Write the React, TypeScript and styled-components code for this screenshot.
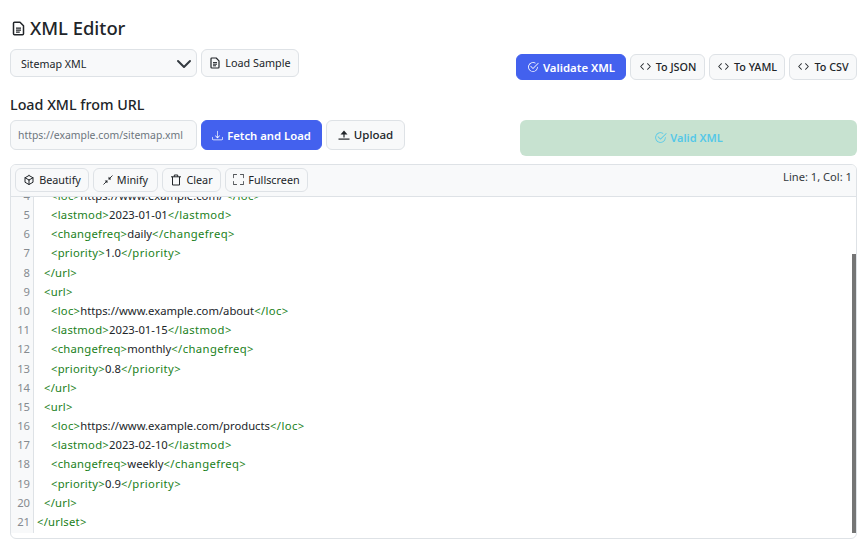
import React from 'react';
import styled, { createGlobalStyle } from 'styled-components';
import { BsDownload, BsCheck2Circle, BsCode, BsFullscreen } from 'react-icons/bs';
import { TbBox } from 'react-icons/tb';

const Global = createGlobalStyle`
  html, body { margin: 0; padding: 0; background: #fff; }
  body { font-family: "Noto Sans", "Open Sans", sans-serif; color: #212529; }
  * { box-sizing: border-box; }
`;

const Page = styled.div`
  width: 866px; height: 548px; padding: 16px 9px 0 10px; overflow: hidden;
`;
const Title = styled.h1`
  display: flex; align-items: center; gap: 4px; margin: 0; height: 24px;
  font-size: 18.4px; font-weight: 500; color: #212529; line-height: 24px; padding-left: 1px;
`;
const TopRow = styled.div`
  display: flex; justify-content: space-between; margin-top: 9px; height: 31px;
`;
const Group = styled.div<{ $end?: boolean }>`
  display: flex; align-items: flex-start; align-self: ${p => (p.$end ? 'flex-end' : 'flex-start')}; gap: 4px;
`;
const Select = styled.div`
  width: 187px; height: 28px; display: flex; align-items: center; justify-content: space-between;
  padding: 1px 4px 0 10px; border: 1px solid #dee2e6; border-radius: 6px; background: #f8f9fa;
  font-size: 10.7px; color: #212529;
`;
const Button = styled.div<{ $primary?: boolean; $strong?: boolean; $w: number; $h: number; $fs?: number }>`
  display: flex; align-items: center; justify-content: center; gap: 4px;
  width: ${p => p.$w}px; height: ${p => p.$h}px; border-radius: 6px;
  padding-bottom: ${p => (p.$primary ? 0 : 1)}px;
  font-size: ${p => p.$fs ?? 10.8}px;
  font-weight: ${p => (p.$primary ? 600 : p.$strong ? 500 : 400)};
  background: ${p => (p.$primary ? '#4361ee' : '#f8f9fa')};
  color: ${p => (p.$primary ? '#fff' : '#212529')};
  border: 1px solid ${p => (p.$primary ? '#4361ee' : '#dee2e6')};
`;
const Label = styled.div`
  margin-top: 15px; height: 20px; font-size: 14.3px; font-weight: 500; line-height: 20px; color: #212529;
`;
const LoadRow = styled.div`
  display: flex; justify-content: space-between; align-items: flex-start; margin-top: 5px; height: 36px;
`;
const UrlInput = styled.div`
  width: 187px; height: 30px; display: flex; align-items: center; padding: 0 7px;
  border: 1px solid #dee2e6; border-radius: 6px; background: #f8f9fa; font-size: 10.4px; color: #6c757d;
  white-space: nowrap; overflow: hidden;
`;
const ValidBox = styled.div`
  width: 337px; height: 36px; display: flex; align-items: center; justify-content: center; gap: 3px;
  padding-bottom: 1px;
  border-radius: 6px; background: #c7e2d0; color: #55c8e8; font-size: 11px; font-weight: 600;
`;
const Editor = styled.div`
  position: relative; margin-top: 8px; width: 847px; height: 375px; border: 1px solid #dee2e6;
  border-radius: 6px; overflow: hidden; background: #fff;
`;
const Toolbar = styled.div`
  height: 32px; display: flex; justify-content: space-between; align-items: flex-start;
  padding: 3px 4px; background: #f8f9fa; border-bottom: 1px solid #dee2e6;
`;
const Position = styled.div`
  font-size: 11.15px; line-height: 18px; color: #343a40;
`;
const CodeArea = styled.div`
  height: 336px; overflow: hidden;
`;
const Lines = styled.div`
  margin-top: -11.2px;
`;
const Row = styled.div`
  display: flex; height: 19.2px; line-height: 19.2px; font-size: 11.25px;
`;
const Num = styled.div`
  width: 23px; flex: none; text-align: right; padding-right: 3px; color: #868b90; background: #f8f9fa;
  border-right: 1px solid #dee2e6;
`;
const Code = styled.div<{ $indent: number }>`
  padding-left: ${p => 3 + p.$indent * 7}px; white-space: pre; color: #212529;
`;
const Tag = styled.span<{ $close?: boolean }>`
  color: #1a7f1a; letter-spacing: ${p => (p.$close ? 0.4 : 0.25)}px;
`;
const GutterFill = styled.div`
  width: 23px; height: 20px; background: #f8f9fa; border-right: 1px solid #dee2e6;
`;
const Scrollbar = styled.div`
  position: absolute; right: 0; top: 89px; width: 4px; height: 279px; background: #757575;
`;

const Chevron = () => (
  <svg width="16" height="16" viewBox="0 0 16 16" fill="none" stroke="#343a40" strokeWidth="2" strokeLinecap="round" strokeLinejoin="round">
    <path d="m2 5 6 6 6-6" />
  </svg>
);
const FileIcon = ({ size }: { size: number }) => (
  <svg width={size} height={size} viewBox="0 0 12 12" fill="none" stroke="currentColor" strokeWidth="1.2">
    <path d="M2 1.8a.8.8 0 0 1 .8-.8H7.2L10 3.8v6.4a.8.8 0 0 1-.8.8H2.8a.8.8 0 0 1-.8-.8Z" strokeLinejoin="round" />
    <path d="M4 5.6h4M4 7.2h4M4 8.8h3" strokeWidth="1" />
  </svg>
);
const MinifyIcon = () => (
  <svg width="10" height="10" viewBox="0 0 10 10" fill="currentColor" stroke="currentColor" strokeWidth="0.9">
    <path d="M0.5 9.5 3.4 6.6" />
    <path d="M4.4 5.6 4.2 8 2 5.8Z" strokeWidth="0.3" />
    <path d="M9.5 0.5 6.6 3.4" />
    <path d="M5.6 4.4 5.8 2 8 4.2Z" strokeWidth="0.3" />
  </svg>
);
const TrashIcon = () => (
  <svg width="12" height="12" viewBox="0 0 12 12" fill="none" stroke="currentColor" strokeWidth="1">
    <path d="M1 2.8h10M2.5 2.8v8.2h7V2.8M4.3 2.8V1h3.4v1.8" />
  </svg>
);
const UploadIcon = () => (
  <svg width="12" height="12" viewBox="0 0 12 12" fill="currentColor">
    <path d="M6 1.5 2.5 5.5H5.4V8.5H6.6V5.5H9.5Z" />
    <rect x="0.5" y="9.5" width="11" height="1.2" />
  </svg>
);

const code: [number, string, string?, string?][] = [
  [2, '<loc>', 'https://www.example.com/ ', '</loc>'],
  [2, '<lastmod>', '2023-01-01', '</lastmod>'],
  [2, '<changefreq>', 'daily', '</changefreq>'],
  [2, '<priority>', '1.0', '</priority>'],
  [1, '</url>'],
  [1, '<url>'],
  [2, '<loc>', 'https://www.example.com/about', '</loc>'],
  [2, '<lastmod>', '2023-01-15', '</lastmod>'],
  [2, '<changefreq>', 'monthly', '</changefreq>'],
  [2, '<priority>', '0.8', '</priority>'],
  [1, '</url>'],
  [1, '<url>'],
  [2, '<loc>', 'https://www.example.com/products', '</loc>'],
  [2, '<lastmod>', '2023-02-10', '</lastmod>'],
  [2, '<changefreq>', 'weekly', '</changefreq>'],
  [2, '<priority>', '0.9', '</priority>'],
  [1, '</url>'],
  [0, '</urlset>'],
];

export default function App() {
  return (
    <Page>
      <Global />
      <Title><FileIcon size={15} />XML Editor</Title>
      <TopRow>
        <Group>
          <Select>Sitemap XML<Chevron /></Select>
          <Button $w={98} $h={28}><FileIcon size={12} />Load Sample</Button>
        </Group>
        <Group $end>
          <Button $primary $w={110} $h={26} $fs={11.4}><BsCheck2Circle size={12} />Validate XML</Button>
          <Button $w={75} $h={26} $strong><BsCode size={13} />To JSON</Button>
          <Button $w={76} $h={26} $strong><BsCode size={13} />To YAML</Button>
          <Button $w={68} $h={26} $strong><BsCode size={13} />To CSV</Button>
        </Group>
      </TopRow>
      <Label>Load XML from URL</Label>
      <LoadRow>
        <Group>
          <UrlInput>https://example.com/sitemap.xml</UrlInput>
          <Button $primary $w={121} $h={30} $fs={11.3}><BsDownload size={11} />Fetch and Load</Button>
          <Button $w={79} $h={30} $fs={11.5} $strong><UploadIcon />Upload</Button>
        </Group>
        <ValidBox><BsCheck2Circle size={13} />Valid XML</ValidBox>
      </LoadRow>
      <Editor>
        <Toolbar>
          <Group>
            <Button $w={74} $h={24}><TbBox size={12} />Beautify</Button>
            <Button $w={65} $h={24}><MinifyIcon />Minify</Button>
            <Button $w={59} $h={24}><TrashIcon />Clear</Button>
            <Button $w={83} $h={24}><BsFullscreen size={11} />Fullscreen</Button>
          </Group>
          <Position>Line: 1, Col: 1</Position>
        </Toolbar>
        <CodeArea>
          <Lines>
            {code.map(([ind, a, b, c], i) => (
              <Row key={i}>
                <Num>{i + 4}</Num>
                <Code $indent={ind}><Tag>{a}</Tag>{b}{c && <Tag $close>{c}</Tag>}</Code>
              </Row>
            ))}
            <GutterFill />
          </Lines>
        </CodeArea>
        <Scrollbar />
      </Editor>
    </Page>
  );
}
